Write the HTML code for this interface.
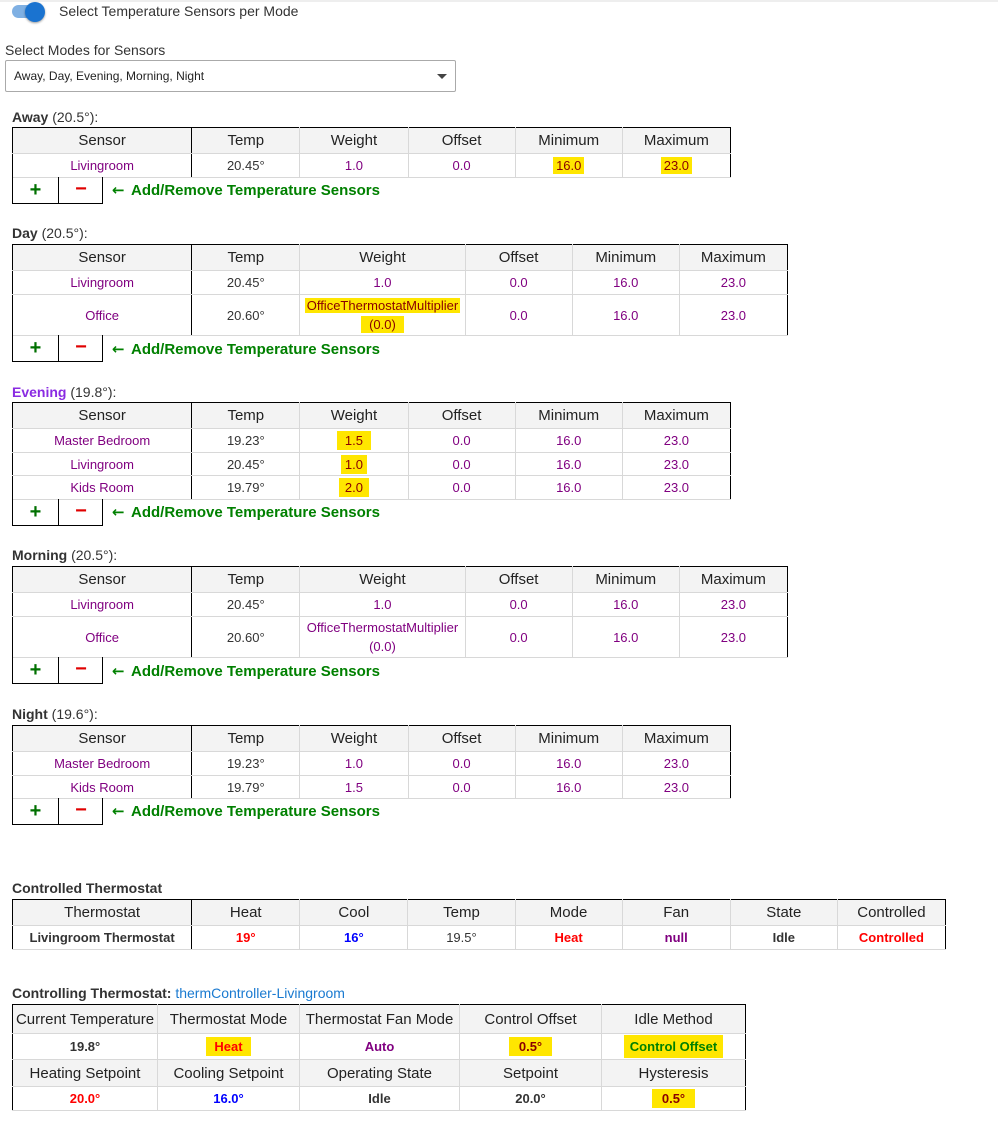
<!DOCTYPE html>
<html><head><meta charset="utf-8"><style>
*{box-sizing:border-box;margin:0;padding:0}
body{width:998px;height:1142px;background:#fff;font-family:"Liberation Sans",sans-serif;color:#222;position:relative;overflow:hidden}
.a{position:absolute}
.lbl{font-size:14px;color:#333}
.lbl b{color:#333}
table{position:absolute;border-collapse:collapse;table-layout:fixed;font-size:13px}
td,th{border:1px solid #d8d8d8;text-align:center;padding:0;vertical-align:middle}
tr>*:first-child{border-left:1px solid #000}
tr>*:last-child{border-right:1px solid #000}
tr:first-child>th{border-top:1px solid #000}
th{background:#f3f3f3;font-weight:normal;font-size:15px;color:#222}
td.s,th.s{border-right:1px solid #000}
.p{color:#800080}
.t{color:#333}
.hl{background:#ffe600;color:#8a0000;padding:1px 3px}
.btns{position:absolute;left:12px;width:91px;height:27px;border:1px solid #000;border-top:none;font-size:20px;font-weight:bold}
.btns .pl{position:absolute;left:0;width:45px;text-align:center;color:#007000;line-height:26px}
.btns .mi{position:absolute;left:45px;width:45px;border-left:1px solid #000;height:26px;text-align:center;color:#e00000;line-height:24px}
.add{position:absolute;left:112px;font-size:15px;font-weight:bold;color:#008000;white-space:nowrap}
.add i{font-style:normal;font-family:"DejaVu Sans",sans-serif;font-size:15px;display:inline-block;width:19px}
.n{font-family:"Liberation Sans Narrow","Liberation Sans",sans-serif}
.ct th{font-size:15px}
.ct td{font-size:13px;font-weight:bold}
</style></head><body>
<div class="a" style="left:0;top:0;width:998px;height:2px;background:#eee"></div>
<div class="a" style="left:12px;top:5px;width:32px;height:13px;border-radius:7px;background:#7fb0e3"></div>
<div class="a" style="left:25px;top:2px;width:20px;height:20px;border-radius:50%;background:#1a73d0;box-shadow:0 1px 2px rgba(0,0,0,.4)"></div>
<div class="a" style="left:59px;top:3px;font-size:14px;color:#333">Select Temperature Sensors per Mode</div>
<div class="a" style="left:5px;top:42px;font-size:14px;color:#333">Select Modes for Sensors</div>
<div class="a" style="left:5px;top:60px;width:451px;height:32px;border:1px solid #aaa;border-radius:2px;font-size:12px;color:#222;padding:8px 0 0 8px">Away, Day, Evening, Morning, Night</div>
<div class="a" style="left:437px;top:74px;width:0;height:0;border-left:5px solid transparent;border-right:5px solid transparent;border-top:5px solid #444"></div>

<!-- Away -->
<div class="a lbl" style="left:12px;top:109px"><b>Away</b> (20.5°):</div>
<table style="left:12px;top:127px;width:719px">
<colgroup><col style="width:179px"><col style="width:108px"><col style="width:108px"><col style="width:107px"><col style="width:107px"><col style="width:108px"></colgroup>
<tr style="height:26px"><th class="s">Sensor</th><th>Temp</th><th>Weight</th><th>Offset</th><th>Minimum</th><th>Maximum</th></tr>
<tr style="height:24px"><td class="s p">Livingroom</td><td class="t">20.45°</td><td class="p">1.0</td><td class="p">0.0</td><td class="p"><span class="hl">16.0</span></td><td class="p"><span class="hl">23.0</span></td></tr>
</table>
<div class="btns" style="top:177px"><div class="pl">+</div><div class="mi">−</div></div>
<div class="add" style="top:181px"><i>←</i>Add/Remove Temperature Sensors</div>

<!-- Day -->
<div class="a lbl" style="left:12px;top:225px"><b>Day</b> (20.5°):</div>
<table style="left:12px;top:244px;width:776px">
<colgroup><col style="width:179px"><col style="width:108px"><col style="width:165px"><col style="width:107px"><col style="width:107px"><col style="width:108px"></colgroup>
<tr style="height:26px"><th class="s">Sensor</th><th>Temp</th><th>Weight</th><th>Offset</th><th>Minimum</th><th>Maximum</th></tr>
<tr style="height:24px"><td class="s p">Livingroom</td><td class="t">20.45°</td><td class="p">1.0</td><td class="p">0.0</td><td class="p">16.0</td><td class="p">23.0</td></tr>
<tr style="height:41px"><td class="s p">Office</td><td class="t">20.60°</td><td class="p" style="line-height:19px"><span class="hl" style="padding:0 2px">OfficeThermostatMultiplier</span><br><span class="hl" style="padding:1px 8px">(0.0)</span></td><td class="p">0.0</td><td class="p">16.0</td><td class="p">23.0</td></tr>
</table>
<div class="btns" style="top:335px"><div class="pl">+</div><div class="mi">−</div></div>
<div class="add" style="top:340px"><i>←</i>Add/Remove Temperature Sensors</div>

<!-- Evening -->
<div class="a lbl" style="left:12px;top:384px"><b style="color:#8a2be2">Evening</b> (19.8°):</div>
<table style="left:12px;top:402px;width:719px">
<colgroup><col style="width:179px"><col style="width:108px"><col style="width:108px"><col style="width:107px"><col style="width:107px"><col style="width:108px"></colgroup>
<tr style="height:26px"><th class="s">Sensor</th><th>Temp</th><th>Weight</th><th>Offset</th><th>Minimum</th><th>Maximum</th></tr>
<tr style="height:24px"><td class="s p">Master Bedroom</td><td class="t">19.23°</td><td class="p"><span class="hl" style="padding:2px 8px">1.5</span></td><td class="p">0.0</td><td class="p">16.0</td><td class="p">23.0</td></tr>
<tr style="height:23px"><td class="s p">Livingroom</td><td class="t">20.45°</td><td class="p"><span class="hl" style="padding:2px 4px">1.0</span></td><td class="p">0.0</td><td class="p">16.0</td><td class="p">23.0</td></tr>
<tr style="height:24px"><td class="s p">Kids Room</td><td class="t">19.79°</td><td class="p"><span class="hl" style="padding:2px 6px">2.0</span></td><td class="p">0.0</td><td class="p">16.0</td><td class="p">23.0</td></tr>
</table>
<div class="btns" style="top:499px"><div class="pl">+</div><div class="mi">−</div></div>
<div class="add" style="top:503px"><i>←</i>Add/Remove Temperature Sensors</div>

<!-- Morning -->
<div class="a lbl" style="left:12px;top:547px"><b>Morning</b> (20.5°):</div>
<table style="left:12px;top:566px;width:776px">
<colgroup><col style="width:179px"><col style="width:108px"><col style="width:165px"><col style="width:107px"><col style="width:107px"><col style="width:108px"></colgroup>
<tr style="height:26px"><th class="s">Sensor</th><th>Temp</th><th>Weight</th><th>Offset</th><th>Minimum</th><th>Maximum</th></tr>
<tr style="height:24px"><td class="s p">Livingroom</td><td class="t">20.45°</td><td class="p">1.0</td><td class="p">0.0</td><td class="p">16.0</td><td class="p">23.0</td></tr>
<tr style="height:41px"><td class="s p">Office</td><td class="t">20.60°</td><td class="p" style="line-height:19px">OfficeThermostatMultiplier<br>(0.0)</td><td class="p">0.0</td><td class="p">16.0</td><td class="p">23.0</td></tr>
</table>
<div class="btns" style="top:657px"><div class="pl">+</div><div class="mi">−</div></div>
<div class="add" style="top:662px"><i>←</i>Add/Remove Temperature Sensors</div>

<!-- Night -->
<div class="a lbl" style="left:12px;top:706px"><b>Night</b> (19.6°):</div>
<table style="left:12px;top:725px;width:719px">
<colgroup><col style="width:179px"><col style="width:108px"><col style="width:108px"><col style="width:107px"><col style="width:107px"><col style="width:108px"></colgroup>
<tr style="height:26px"><th class="s">Sensor</th><th>Temp</th><th>Weight</th><th>Offset</th><th>Minimum</th><th>Maximum</th></tr>
<tr style="height:24px"><td class="s p">Master Bedroom</td><td class="t">19.23°</td><td class="p">1.0</td><td class="p">0.0</td><td class="p">16.0</td><td class="p">23.0</td></tr>
<tr style="height:23px"><td class="s p">Kids Room</td><td class="t">19.79°</td><td class="p">1.5</td><td class="p">0.0</td><td class="p">16.0</td><td class="p">23.0</td></tr>
</table>
<div class="btns" style="top:798px"><div class="pl">+</div><div class="mi">−</div></div>
<div class="add" style="top:802px"><i>←</i>Add/Remove Temperature Sensors</div>

<!-- Controlled Thermostat -->
<div class="a n" style="left:12px;top:880px;font-size:14px;font-weight:bold;color:#333">Controlled Thermostat</div>
<table class="ct n" style="left:12px;top:899px;width:934px">
<colgroup><col style="width:179px"><col style="width:108px"><col style="width:108px"><col style="width:107px"><col style="width:107px"><col style="width:108px"><col style="width:107px"><col style="width:108px"></colgroup>
<tr style="height:26px"><th class="s">Thermostat</th><th>Heat</th><th>Cool</th><th>Temp</th><th>Mode</th><th>Fan</th><th>State</th><th>Controlled</th></tr>
<tr style="height:24px"><td class="s" style="color:#333">Livingroom Thermostat</td><td style="color:#f00">19°</td><td style="color:#00f">16°</td><td style="font-weight:normal;color:#333">19.5°</td><td style="color:#f00">Heat</td><td style="color:#800080">null</td><td style="color:#333">Idle</td><td style="color:#f00">Controlled</td></tr>
</table>

<!-- Controlling Thermostat -->
<div class="a n" style="left:12px;top:985px;font-size:14px;color:#333"><b>Controlling Thermostat:</b> <span style="color:#1a7ad0">thermController-Livingroom</span></div>
<table class="ct n" style="left:12px;top:1004px;width:734px">
<colgroup><col style="width:145px"><col style="width:142px"><col style="width:160px"><col style="width:142px"><col style="width:144px"></colgroup>
<tr style="height:29px"><th>Current Temperature</th><th>Thermostat Mode</th><th>Thermostat Fan Mode</th><th>Control Offset</th><th>Idle Method</th></tr>
<tr style="height:26px"><td style="color:#333">19.8°</td><td style="color:#f00"><span class="hl" style="color:#f00;padding:2px 8px">Heat</span></td><td style="color:#800080">Auto</td><td><span class="hl" style="padding:2px 10px">0.5°</span></td><td><span class="hl" style="color:#008000;padding:4px 6px">Control Offset</span></td></tr>
<tr style="height:27px"><th>Heating Setpoint</th><th>Cooling Setpoint</th><th>Operating State</th><th>Setpoint</th><th>Hysteresis</th></tr>
<tr style="height:24px"><td style="color:#f00">20.0°</td><td style="color:#00f">16.0°</td><td style="color:#333">Idle</td><td style="color:#333">20.0°</td><td><span class="hl" style="padding:2px 10px">0.5°</span></td></tr>
</table>
</body></html>
